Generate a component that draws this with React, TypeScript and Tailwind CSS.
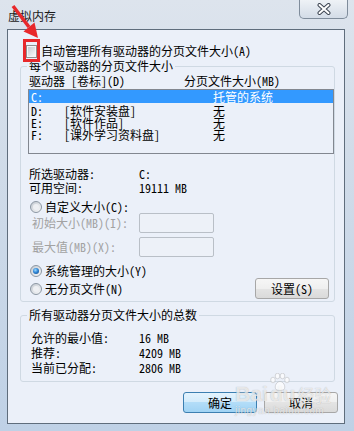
import React from "react";

function Checkbox() {
  return (
    <span className="w-[11px] h-[13px] border border-[#8e8f8f] bg-[#f4f5f6] flex items-center justify-center shrink-0">
      <span className="w-[7px] h-[9px] bg-[linear-gradient(135deg,#c7ccd2,#f6f7f8)]" />
    </span>
  );
}

function Radio({ checked }: { checked?: boolean }) {
  return (
    <span className="w-[12px] h-[12px] rounded-full border border-[#8c97a3] bg-[linear-gradient(135deg,#c4cad1,#f7f8f9)] flex items-center justify-center shrink-0">
      {checked ? (
        <span className="w-[6px] h-[6px] rounded-full bg-[radial-gradient(circle_at_40%_35%,#9ddbff_0%,#2f86d6_45%,#0c3f7e_100%)]" />
      ) : (
        <span className="w-[6px] h-[6px] rounded-full bg-[#eef0f3]" />
      )}
    </span>
  );
}

function Btn({ children, primary }: { children: React.ReactNode; primary?: boolean }) {
  return (
    <div
      className={
        primary
          ? "w-[74px] h-[21px] rounded-[3px] border border-[#3c7fb1] bg-[linear-gradient(#e4f3fd_0%,#d2ebfb_50%,#b3ddf8_50%,#a0d3f4_100%)] flex items-center justify-center"
          : "w-[74px] h-[21px] rounded-[3px] border border-[#a7a7a7] bg-[linear-gradient(#f6f6f6_0%,#efefef_50%,#e4e4e4_50%,#dadada_100%)] flex items-center justify-center"
      }
    >
      {children}
    </div>
  );
}

export default function App() {
  return (
    <div className="relative w-[354px] h-[431px] overflow-hidden flex flex-col bg-[linear-gradient(180deg,#dde4ed_0%,#d1dce9_35%,#bfd1e6_100%)] text-[12px] leading-[14px] text-black font-[family-name:'Noto_Sans_Mono_CJK_SC','Noto_Sans_CJK_SC',sans-serif]">
      {/* title bar */}
      <div className="h-[29px] flex items-start justify-between shrink-0">
        <span className="ml-[8px] mt-[9px] text-[#1a1a1a]">虚拟内存</span>
        <div className="mr-[6px] w-[49px] h-[19px] rounded-b-[5px] border border-t-0 border-[#7f8c9b] bg-[linear-gradient(#eef2f6,#d3dce7)] flex items-center justify-center">
          <svg width="14" height="12" viewBox="0 0 14 12">
            <path d="M2.5 2 L11.5 10 M11.5 2 L2.5 10" stroke="#3d4552" strokeWidth="4" strokeLinecap="round" />
            <path d="M2.5 2 L11.5 10 M11.5 2 L2.5 10" stroke="#ffffff" strokeWidth="2" strokeLinecap="round" />
          </svg>
        </div>
      </div>

      {/* client area */}
      <div className="ml-[7px] mr-[9px] mb-[7px] flex-1 border border-[#5f6d7c] bg-[#ebf0f9] flex flex-col">
        <div className="mt-[14px] ml-[18px] h-[14px] flex items-center gap-[4px]">
          <Checkbox />
          <span>自动管理所有驱动器的分页文件大小(A)</span>
        </div>

        <fieldset className="mt-[1px] ml-[12px] w-[315px] border border-[#cfd9e3] rounded-[3px] pb-[2px]">
          <legend className="ml-[6px] px-[2px]">每个驱动器的分页文件大小</legend>
          <div className="pl-[7px] flex flex-col">
            <div className="mt-[1px] ml-[1px] h-[14px] flex">
              <span className="w-[155px]">驱动器 [卷标](D)</span>
              <span>分页文件大小(MB)</span>
            </div>
            <div className="mt-[1px] w-[306px] h-[65px] border border-[#828790] flex flex-col leading-[12px]">
              <div className="h-[13px] bg-[#3399ff] text-white flex items-center pl-[2px]">
                <span className="w-[33px]">C:</span>
                <span className="w-[149px]"></span>
                <span>托管的系统</span>
              </div>
              <div className="mt-[2px] h-[12px] flex items-center pl-[2px]">
                <span className="w-[33px]">D:</span>
                <span className="w-[149px]">[软件安装盘]</span>
                <span>无</span>
              </div>
              <div className="h-[12px] flex items-center pl-[2px]">
                <span className="w-[33px]">E:</span>
                <span className="w-[149px]">[软件作品]</span>
                <span>无</span>
              </div>
              <div className="h-[12px] flex items-center pl-[2px]">
                <span className="w-[33px]">F:</span>
                <span className="w-[149px]">[课外学习资料盘]</span>
                <span>无</span>
              </div>
            </div>

            <div className="mt-[13px] ml-[1px] h-[14px] flex">
              <span className="w-[110px]">所选驱动器:</span>
              <span>C:</span>
            </div>
            <div className="ml-[1px] h-[14px] flex">
              <span className="w-[110px]">可用空间:</span>
              <span>19111 MB</span>
            </div>

            <div className="mt-[6px] ml-[2px] h-[12px] flex items-center gap-[3px] leading-[12px]">
              <Radio />
              <span>自定义大小(C):</span>
            </div>
            <div className="ml-[4px] h-[20px] flex items-center">
              <span className="w-[107px] text-[#a2a2a2]">初始大小(MB)(I):</span>
              <div className="w-[75px] h-[20px] rounded-[2px] border border-[#b9bfc7] bg-[#edf1f8]" />
            </div>
            <div className="mt-[4px] ml-[4px] h-[20px] flex items-center">
              <span className="w-[107px] text-[#a2a2a2]">最大值(MB)(X):</span>
              <div className="w-[75px] h-[20px] rounded-[2px] border border-[#b9bfc7] bg-[#edf1f8]" />
            </div>

            <div className="mt-[7px] flex justify-between items-start">
              <div className="ml-[2px] flex flex-col gap-[4px]">
                <div className="h-[14px] flex items-center gap-[3px]">
                  <Radio checked />
                  <span>系统管理的大小(Y)</span>
                </div>
                <div className="h-[14px] flex items-center gap-[3px]">
                  <Radio />
                  <span>无分页文件(N)</span>
                </div>
              </div>
              <div className="mt-[14px] mr-[5px]">
                <Btn>设置(S)</Btn>
              </div>
            </div>
          </div>
        </fieldset>

        <fieldset className="mt-[6px] ml-[12px] w-[315px] border border-[#cfd9e3] rounded-[3px] pb-[6px]">
          <legend className="ml-[6px] px-[2px]">所有驱动器分页文件大小的总数</legend>
          <div className="mt-[8px] pl-[10px] flex flex-col">
            <div className="h-[15px] flex items-center">
              <span className="w-[108px]">允许的最小值:</span>
              <span>16 MB</span>
            </div>
            <div className="h-[15px] flex items-center">
              <span className="w-[108px]">推荐:</span>
              <span>4209 MB</span>
            </div>
            <div className="h-[15px] flex items-center">
              <span className="w-[108px]">当前已分配:</span>
              <span>2806 MB</span>
            </div>
          </div>
        </fieldset>

        <div className="mt-[10px] pr-[6px] flex justify-end gap-[7px]">
          <Btn primary>确定</Btn>
          <Btn>取消</Btn>
        </div>
      </div>

      {/* red annotation */}
      <div className="absolute left-[23px] top-[39px] w-[17px] h-[23px] border-[3px] border-[#e8282b]" />
      <svg className="absolute left-0 top-0" width="45" height="45" viewBox="0 0 45 45">
        <line x1="13" y1="6" x2="29" y2="27" stroke="#e8282b" strokeWidth="3.5" />
        <polygon points="38,38 23.5,31.5 34.5,22.5" fill="#e8282b" />
      </svg>

      {/* watermark */}
      <div className="absolute left-[235px] top-[373px] pointer-events-none flex flex-col text-white/70 [text-shadow:0_0_1px_rgba(90,90,90,0.45)]">
        <div className="relative flex items-end font-[family-name:'Liberation_Sans',sans-serif] font-bold">
          <span className="text-[21px] leading-[22px] mt-[10px]">Bai</span>
          <span className="text-[21px] leading-[22px] ml-[2px]">du</span>
          <span className="text-[17px] leading-[20px] ml-[2px] font-normal font-[family-name:'Noto_Sans_CJK_SC',sans-serif]">经验</span>
          <svg className="absolute left-[34px] top-[0px] opacity-70" width="22" height="18" viewBox="0 0 22 18">
            <g fill="#ffffff" stroke="#9a9a9a" strokeWidth="0.5">
              <ellipse cx="4" cy="7" rx="2.3" ry="2.8" />
              <ellipse cx="8.5" cy="3" rx="2.3" ry="2.8" />
              <ellipse cx="13.5" cy="3" rx="2.3" ry="2.8" />
              <ellipse cx="18" cy="7" rx="2.3" ry="2.8" />
              <path d="M11 8.5 C6.5 8.5 4.5 16 8 17 C10 17.5 12 17.5 14 17 C17.5 16 15.5 8.5 11 8.5Z" />
            </g>
          </svg>
        </div>
        <span className="text-[10px] leading-[11px] font-[family-name:'Liberation_Sans',sans-serif] tracking-[0.5px]">jingyan.baidu.com</span>
      </div>
    </div>
  );
}
